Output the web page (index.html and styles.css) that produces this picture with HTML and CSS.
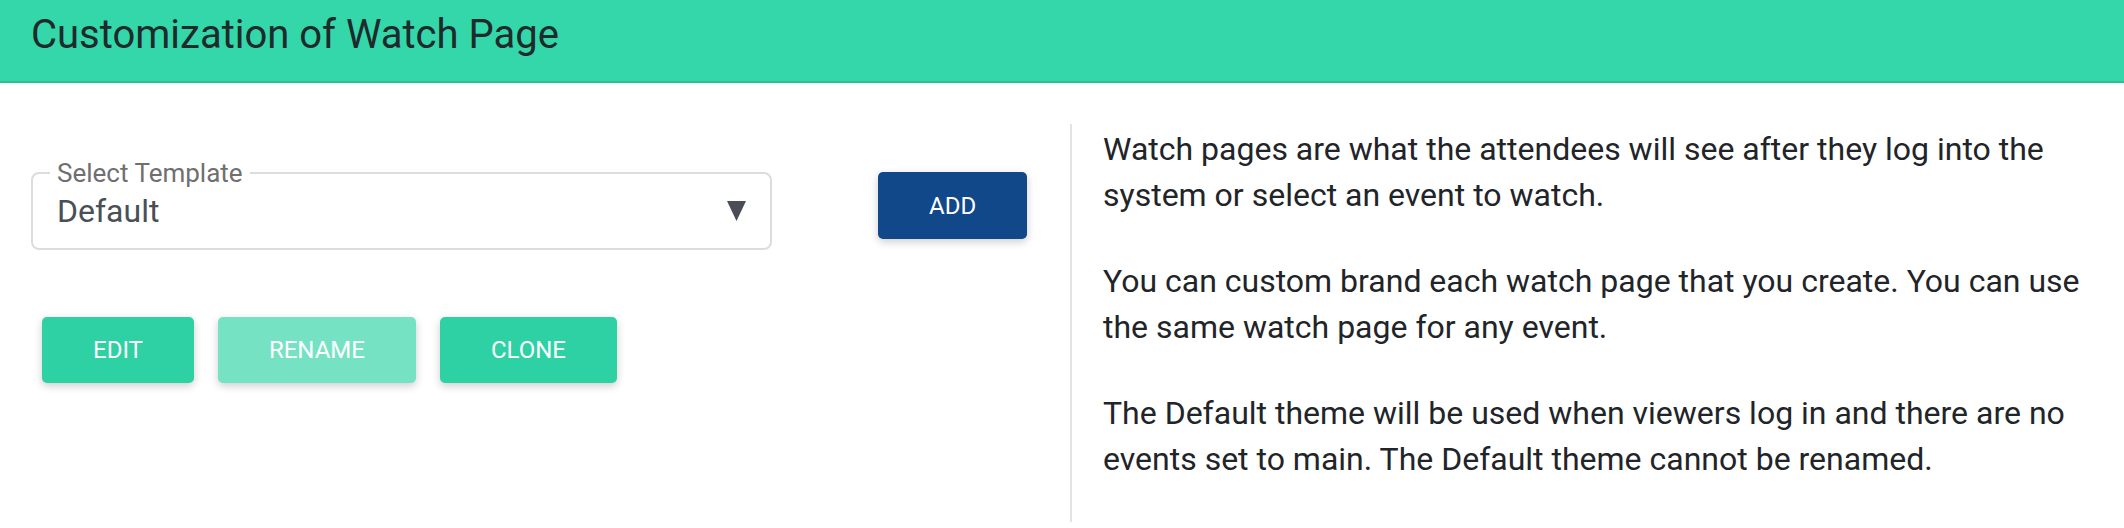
FILE: index.html
```html
<!DOCTYPE html>
<html>
<head>
<meta charset="utf-8">
<link rel="stylesheet" href="styles.css">
</head>
<body>
<header class="topbar">
  <h1 class="title">Customization of Watch Page</h1>
</header>
<main class="main">
  <section class="left">
    <div class="select-row">
      <fieldset class="select">
        <legend class="select-label">Select Template</legend>
        <div class="select-value">
          <span>Default</span>
          <svg class="caret" width="19" height="20" viewBox="0 0 19 20"><polygon points="0,0 19,0 9.5,20" fill="#4a4d55"/></svg>
        </div>
      </fieldset>
      <button class="btn btn-blue btn-add">ADD</button>
    </div>
    <div class="actions">
      <button class="btn btn-green">EDIT</button>
      <button class="btn btn-green btn-disabled">RENAME</button>
      <button class="btn btn-green">CLONE</button>
    </div>
  </section>
  <section class="right">
    <p class="info">Watch pages are what the attendees will see after they log into the system or select an event to watch.</p>
    <p class="info">You can custom brand each watch page that you create. You can use the same watch page for any event.</p>
    <p class="info">The Default theme will be used when viewers log in and there are no events set to main. The Default theme cannot be renamed.</p>
  </section>
</main>
</body>
</html>
```
FILE: styles.css
```css
html, body {
  margin: 0;
  padding: 0;
  background: #ffffff;
  font-family: Roboto, "Liberation Sans", Arial, sans-serif;
}
.topbar {
  height: 81px;
  background: #33d7aa;
  border-bottom: 2px solid #2bbf96;
  box-sizing: content-box;
  padding: 0 31px;
}
.title {
  margin: 0;
  padding-top: 11px;
  font-size: 40px;
  line-height: 48px;
  font-weight: 400;
  color: #1f2a2b;
}
.main {
  display: flex;
  align-items: flex-start;
}
.left {
  width: 1039px;
  padding: 76px 0 0 31px;
}
.select-row {
  display: flex;
  align-items: flex-start;
}
.select {
  width: 741px;
  box-sizing: border-box;
  margin: 0;
  border: 2px solid #dcdcdc;
  border-radius: 8px;
  padding: 0 24px 0 24px;
}
.select-label {
  margin-left: -7px;
  padding: 0 7px;
  font-size: 26px;
  line-height: 28px;
  color: #6f6f6f;
}
.select-value {
  display: flex;
  align-items: center;
  justify-content: space-between;
  margin-top: 4px;
  height: 40px;
  padding-bottom: 17px;
  font-size: 32px;
  line-height: 40px;
  color: #4a4f56;
}
.caret {
  display: block;
}
.btn {
  font-family: Roboto, "Liberation Sans", Arial, sans-serif;
  font-size: 24px;
  font-weight: 400;
  color: #ffffff;
  border: none;
  border-radius: 5px;
  height: 67px;
  padding: 0 51px;
  box-shadow: 0 3px 8px rgba(0, 0, 0, 0.2);
}
.btn-blue {
  background: #104889;
}
.btn-add {
  margin-left: 106px;
  margin-top: 13px;
}
.btn-green {
  background: #2dd1a3;
}
.btn-disabled {
  background: #76e2c4;
}
.actions {
  display: flex;
  gap: 24px;
  margin: 67px 0 0 11px;
}
.actions .btn {
  height: 66px;
}
.right {
  margin-top: 41px;
  border-left: 2px solid #e3e3e3;
  padding-left: 31px;
  width: 990px;
  min-height: 392px;
}
.info {
  margin: 0 0 40px 0;
  font-size: 32px;
  line-height: 46px;
  color: #212428;
}
.info:first-child {
  margin-top: 2px;
}
```
